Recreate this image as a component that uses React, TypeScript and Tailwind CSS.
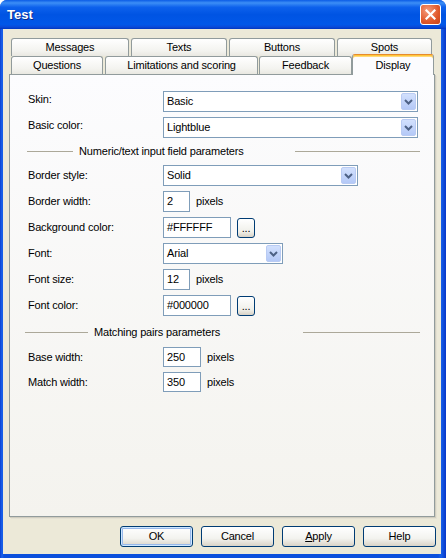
import React from "react";

function Chevron() {
  return (
    <svg width="9" height="6" viewBox="0 0 9 6">
      <path d="M1 1 L4.5 4.5 L8 1" stroke="#4d6185" strokeWidth="2" fill="none" />
    </svg>
  );
}

function Combo({ value, className }: { value: string; className: string }) {
  return (
    <div className={`flex h-[21px] items-stretch border border-[#7f9db9] bg-white ${className}`}>
      <div className="flex flex-1 items-center pl-[3px] text-[11px] text-black">{value}</div>
      <div className="m-px flex w-[15px] items-center justify-center rounded-[2px] border border-[#b9cbf3] bg-[linear-gradient(180deg,#d2e0fd,#b4c9f7)]">
        <Chevron />
      </div>
    </div>
  );
}

function Input({ value, className }: { value: string; className: string }) {
  return (
    <div className={`flex items-center border border-[#7f9db9] bg-white pl-[3px] text-[11px] text-black ${className}`}>
      {value}
    </div>
  );
}

function Dots() {
  return (
    <div className="ml-[6px] flex h-[20px] w-[18px] items-end justify-center rounded-[3px] border border-[#003c74] bg-[linear-gradient(180deg,#ffffff,#f0f0ea_70%,#d8d2c6)] pb-[3px] text-[11px] leading-[11px] text-black">
      ...
    </div>
  );
}

function Row({
  label,
  children,
  className,
  up,
}: {
  label: string;
  children: React.ReactNode;
  className: string;
  up?: boolean;
}) {
  return (
    <div className={`flex items-center pl-[18px] ${className}`}>
      <div className={`w-[135px] text-[11px] text-black ${up ? "-translate-y-[2px]" : ""}`}>{label}</div>
      {children}
    </div>
  );
}

function Pixels({ className }: { className: string }) {
  return <span className={`text-[11px] text-black ${className}`}>pixels</span>;
}

function Btn({ children, def }: { children: React.ReactNode; def?: boolean }) {
  return (
    <div
      className={`flex h-[21px] w-[73px] items-center justify-center rounded-[3px] border border-[#003c74] bg-[linear-gradient(180deg,#ffffff,#f3f3ef_60%,#d9d3c7)] text-[11px] text-black ${
        def ? "shadow-[inset_0_0_0_1px_#cee7ff,inset_0_0_0_2px_#98b8ea]" : ""
      }`}
    >
      {children}
    </div>
  );
}

function Tab({ label, className }: { label: string; className: string }) {
  return (
    <div
      className={`flex h-[18px] items-center justify-center rounded-t-[3px] border border-b-0 border-[#919b9c] bg-[linear-gradient(180deg,#ffffff,#f3f3ef_70%,#e9e8e1)] text-[11px] text-black ${className}`}
    >
      {label}
    </div>
  );
}

export default function App() {
  return (
    <div className="flex h-[558px] w-[446px] flex-col overflow-hidden rounded-t-[7px] bg-[linear-gradient(90deg,#0a3fd0,#1a62ec_2px,#0b4fdc_4px,#0b4fdc_438px,#1660ea_441px,#0836c8)] font-['Liberation_Sans',Arial,sans-serif] tracking-[-0.17px]">
      {/* Title bar */}
      <div className="flex h-[29px] shrink-0 items-center justify-between bg-[linear-gradient(180deg,#0b5ce6_0%,#3c8ef6_10%,#0d61ec_25%,#0054e3_50%,#0157e8_85%,#0a4ad8_93%,#0036c0_100%)] pl-[7px] pr-[5px]">
        <span className="text-[13px] font-bold tracking-normal text-white [text-shadow:1px_1px_0_#0b2a8a]">Test</span>
        <div className="flex h-[21px] w-[21px] items-center justify-center rounded-[3px] border border-white bg-[radial-gradient(circle_at_35%_30%,#f59b7c,#e0582a_60%,#c8431a)]">
          <svg width="11" height="11" viewBox="0 0 11 11">
            <path d="M1.5 1.5 L9.5 9.5 M9.5 1.5 L1.5 9.5" stroke="white" strokeWidth="2.2" strokeLinecap="square" />
          </svg>
        </div>
      </div>

      {/* Client */}
      <div className="mb-[4px] ml-[3px] mr-[5px] flex flex-1 flex-col bg-[#ece9d8] pl-[6px] pt-[9px]">
        {/* Tabs */}
        <div className="flex h-[18px] pl-[2px]">
          <Tab label="Messages" className="w-[118px]" />
          <Tab label="Texts" className="ml-[2px] w-[96px]" />
          <Tab label="Buttons" className="ml-[2px] w-[106px]" />
          <Tab label="Spots" className="ml-[2px] w-[95px]" />
        </div>
        <div className="relative z-10 flex h-[18px] items-end pl-[2px]">
          <Tab label="Questions" className="w-[92px]" />
          <Tab label="Limitations and scoring" className="ml-[2px] w-[153px]" />
          <Tab label="Feedback" className="ml-[1px] w-[93px]" />
          <div className="relative -mb-px flex h-[21px] w-[82px] items-start justify-center rounded-t-[3px] border border-b-0 border-[#919b9c] border-t-[#e68b2c] bg-[#fcfcfe] pt-[2px] text-[11px] text-black shadow-[inset_0_1px_0_#ffc73c,inset_0_2px_0_#ffd97a]">
            Display
          </div>
        </div>

        {/* Panel */}
        <div className="flex h-[443px] w-[426px] flex-col border border-[#919b9c] bg-[linear-gradient(180deg,#fcfcfe,#f4f3ee)] pt-[16px] shadow-[1px_1px_0_#d0cdbf,2px_2px_0_#e4e1d3]">
          <Row label="Skin:" className="" up>
            <Combo value="Basic" className="w-[255px]" />
          </Row>
          <Row label="Basic color:" className="mt-[5px]" up>
            <Combo value="Lightblue" className="w-[255px]" />
          </Row>

          <div className="mt-[6px] flex h-[14px] items-center">
            <div className="ml-[17px] h-px w-[46px] bg-[#aca899]" />
            <span className="ml-[6px] w-[216px] text-[11px] text-black">Numeric/text input field parameters</span>
            <div className="h-px w-[125px] bg-[#aca899]" />
          </div>

          <Row label="Border style:" className="mt-[7px]">
            <Combo value="Solid" className="w-[195px]" />
          </Row>
          <Row label="Border width:" className="mt-[5px]">
            <Input value="2" className="h-[21px] w-[27px]" />
            <Pixels className="ml-[6px]" />
          </Row>
          <Row label="Background color:" className="mt-[5px]">
            <Input value="#FFFFFF" className="h-[21px] w-[68px]" />
            <Dots />
          </Row>
          <Row label="Font:" className="mt-[5px]">
            <Combo value="Arial" className="w-[120px]" />
          </Row>
          <Row label="Font size:" className="mt-[5px]">
            <Input value="12" className="h-[21px] w-[27px]" />
            <Pixels className="ml-[6px]" />
          </Row>
          <Row label="Font color:" className="mt-[5px]">
            <Input value="#000000" className="h-[21px] w-[68px]" />
            <Dots />
          </Row>

          <div className="mt-[9px] flex h-[14px] items-center">
            <div className="ml-[15px] h-px w-[63px] bg-[#aca899]" />
            <span className="ml-[6px] w-[209px] text-[11px] text-black">Matching pairs parameters</span>
            <div className="h-px w-[117px] bg-[#aca899]" />
          </div>

          <Row label="Base width:" className="mt-[8px]">
            <Input value="250" className="h-[20px] w-[38px]" />
            <Pixels className="ml-[6px]" />
          </Row>
          <Row label="Match width:" className="mt-[5px]">
            <Input value="350" className="h-[20px] w-[38px]" />
            <Pixels className="ml-[6px]" />
          </Row>
        </div>

        {/* Buttons */}
        <div className="mt-[9px] flex justify-end gap-[8px] pr-[5px]">
          <Btn def>OK</Btn>
          <Btn>Cancel</Btn>
          <Btn>
            <span>
              <span className="underline">A</span>pply
            </span>
          </Btn>
          <Btn>Help</Btn>
        </div>
      </div>
    </div>
  );
}
